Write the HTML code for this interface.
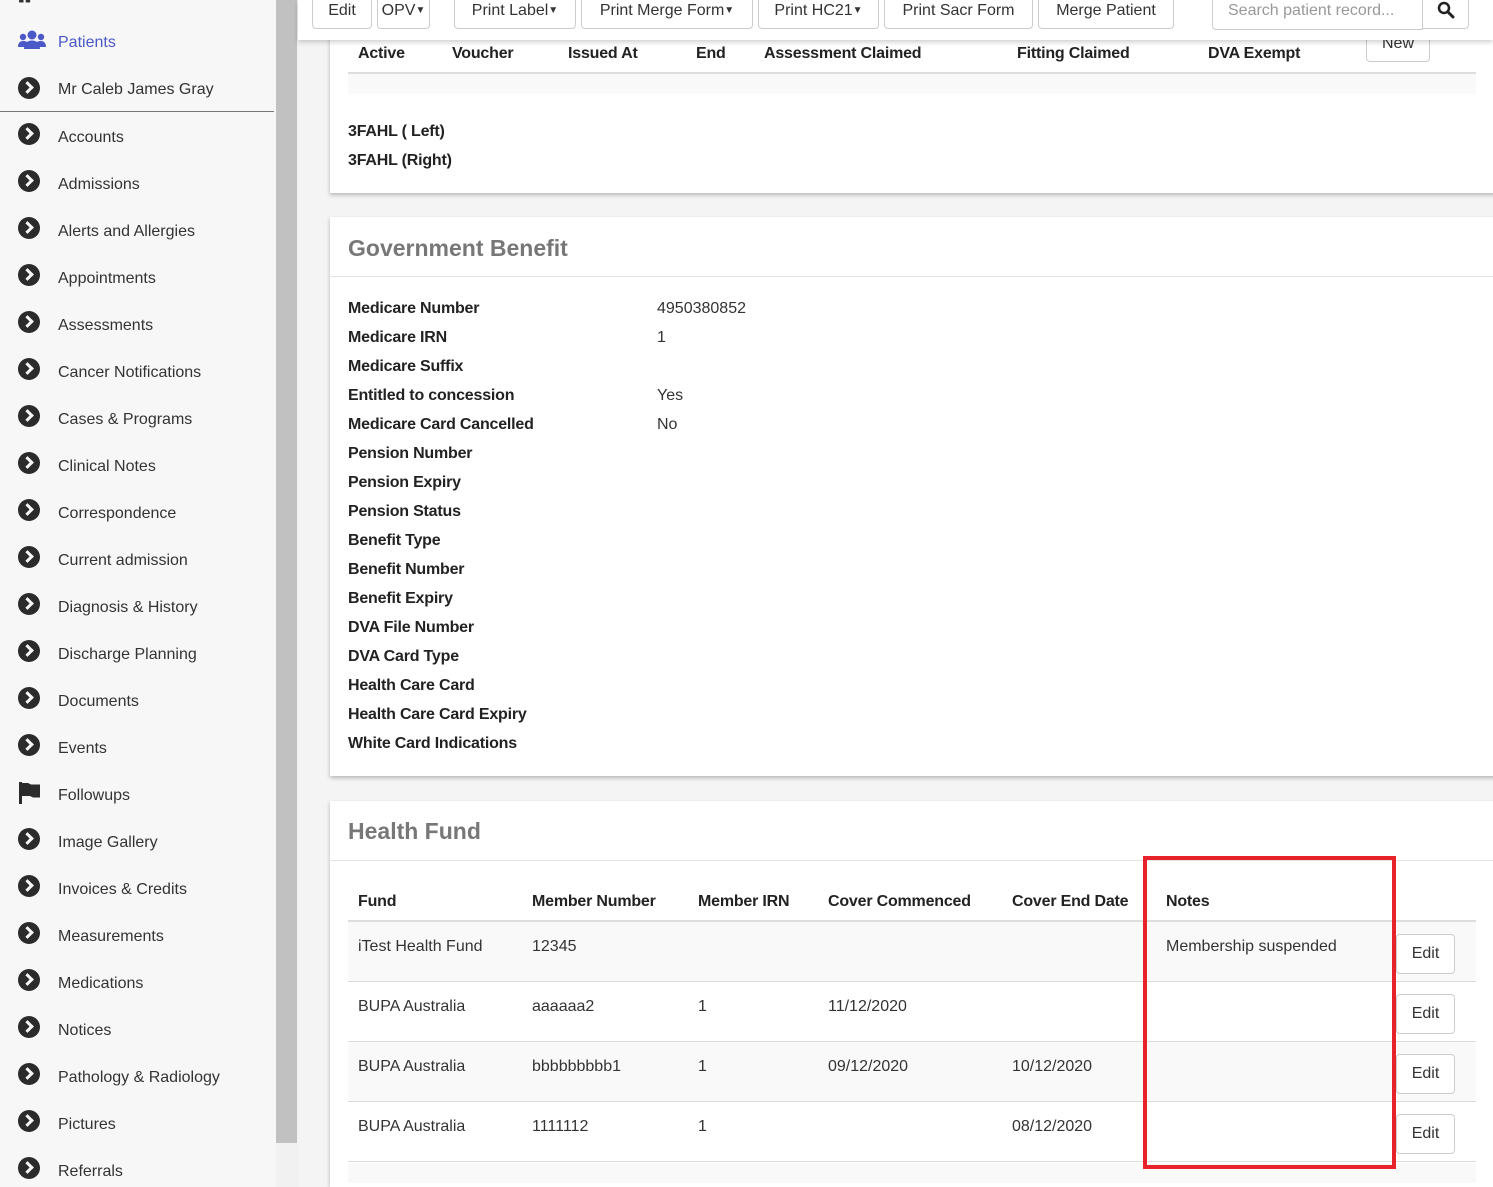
<!DOCTYPE html>
<html><head><meta charset="utf-8"><style>
*{box-sizing:border-box;margin:0;padding:0}
html,body{width:1493px;height:1187px;overflow:hidden}
body{background:#f4f4f4;font-family:"Liberation Sans",sans-serif;font-size:16px;color:#333;position:relative}
.a{position:absolute;white-space:nowrap}
.t{margin-top:2px}
#side{position:absolute;left:0;top:0;width:276px;height:1187px;background:#f7f7f7}
.it{position:absolute;left:58px;font-size:16px;color:#333;line-height:20px;margin-top:2px}
.ic{position:absolute;left:18px;width:22px;height:22px;border-radius:50%;background:#2b2b2b}
.ic:after{content:"";position:absolute;left:5px;top:6px;width:6px;height:6px;border-right:3px solid #f7f7f7;border-top:3px solid #f7f7f7;transform:rotate(45deg)}
.card{position:absolute;left:330px;width:1180px;background:#fff;box-shadow:0 2px 4px rgba(0,0,0,.25)}
.btn{position:absolute;border:1px solid #ccc;border-radius:4px;background:#fff;color:#333;font-size:16px;text-align:center;line-height:30px;white-space:nowrap}
.cr{font-size:10px;vertical-align:2px}
.th{position:absolute;font-weight:bold;color:#222;font-size:16px;margin-top:2px;letter-spacing:-0.2px}
.lb{position:absolute;left:348px;font-weight:bold;color:#222;margin-top:2px;letter-spacing:-0.2px}
.vl{position:absolute;left:657px;color:#333;margin-top:2px}
.h2{position:absolute;left:348px;font-size:23px;font-weight:bold;color:#777;margin-top:1px}
</style></head><body>
<div id="side">
<div class="a" style="left:18px;top:-10px;width:20px;height:14px;font-size:12px;color:#333">▮▮</div>
<svg class="a" style="left:18px;top:30px" width="28" height="20" viewBox="0 0 28 20"><circle cx="14" cy="5" r="4.5" fill="#4a58c8"/><circle cx="5" cy="7" r="3.2" fill="#4a58c8"/><circle cx="23" cy="7" r="3.2" fill="#4a58c8"/><path d="M6 19c0-6 3.5-8.5 8-8.5s8 2.5 8 8.5z" fill="#4a58c8"/><path d="M0 17c0-4 2-6 5-6s4 1 4 1l-2 5z M28 17c0-4-2-6-5-6s-4 1-4 1l2 5z" fill="#4a58c8"/></svg>
<div class="it" style="top:31px;color:#4a58c8">Patients</div>
<div class="ic" style="top:77px"></div><div class="it" style="top:78px">Mr Caleb James Gray</div>
<div class="a" style="left:0;top:111px;width:274px;height:1px;background:#777"></div>
</div>
<div id="items"></div>
<div class="a" style="left:276px;top:0;width:22px;height:1187px;background:#f1f1f1"></div>
<div class="a" style="left:276px;top:0;width:21px;height:1143px;background:#c1c1c1"></div>

<div class="card" style="top:20px;height:173px"></div>
<div class="th" style="left:358px;top:43px">Active</div>
<div class="th" style="left:452px;top:43px">Voucher</div>
<div class="th" style="left:568px;top:43px">Issued At</div>
<div class="th" style="left:696px;top:43px">End</div>
<div class="th" style="left:764px;top:43px">Assessment Claimed</div>
<div class="th" style="left:1017px;top:43px">Fitting Claimed</div>
<div class="th" style="left:1208px;top:43px">DVA Exempt</div>
<div class="btn" style="left:1366px;top:28px;width:64px;height:34px;line-height:30px">New</div>
<div class="a" style="left:348px;top:72px;width:1128px;height:2px;background:#ddd"></div>
<div class="a" style="left:348px;top:74px;width:1128px;height:20px;background:#f9f9f9"></div>
<div class="lb" style="top:121px">3FAHL ( Left)</div>
<div class="lb" style="top:150px">3FAHL (Right)</div>

<div class="card" style="top:217px;height:559px"></div>
<div class="a" style="left:330px;top:276px;width:1163px;height:1px;background:#e5e5e5"></div>
<div class="h2" style="top:234px">Government Benefit</div>
<div id="gb"></div>

<div class="card" style="top:801px;height:386px"></div>
<div class="a" style="left:330px;top:860px;width:1163px;height:1px;background:#e5e5e5"></div>
<div class="h2" style="top:817px">Health Fund</div>
<div class="th" style="left:358px;top:891px">Fund</div>
<div class="th" style="left:532px;top:891px">Member Number</div>
<div class="th" style="left:698px;top:891px">Member IRN</div>
<div class="th" style="left:828px;top:891px">Cover Commenced</div>
<div class="th" style="left:1012px;top:891px">Cover End Date</div>
<div class="th" style="left:1166px;top:891px">Notes</div>
<div class="a" style="left:348px;top:920px;width:1128px;height:2px;background:#ddd"></div>
<div id="rows"></div>
<div class="a" style="left:1143px;top:856px;width:253px;height:313px;border:4px solid #e8222a"></div>

<div class="a" style="left:298px;top:0;width:1195px;height:40px;background:#fff;box-shadow:0 2px 5px rgba(0,0,0,.2)"></div>
<div class="btn" style="left:312px;top:-5px;width:60px;height:34px">Edit</div>
<div class="btn" style="left:377px;top:-5px;width:53px;height:34px">OPV<span class="cr">▼</span></div>
<div class="btn" style="left:454px;top:-5px;width:122px;height:34px">Print Label<span class="cr">▼</span></div>
<div class="btn" style="left:581px;top:-5px;width:172px;height:34px">Print Merge Form<span class="cr">▼</span></div>
<div class="btn" style="left:758px;top:-5px;width:121px;height:34px">Print HC21<span class="cr">▼</span></div>
<div class="btn" style="left:884px;top:-5px;width:149px;height:34px">Print Sacr Form</div>
<div class="btn" style="left:1038px;top:-5px;width:136px;height:34px">Merge Patient</div>
<div class="btn" style="left:1212px;top:-5px;width:211px;height:35px;border-radius:4px 0 0 4px;text-align:left;padding-left:15px;color:#999">Search patient record...</div>
<div class="btn" style="left:1422px;top:-5px;width:47px;height:34px;border-radius:0 4px 4px 0"><svg width="18" height="18" viewBox="0 0 18 18" style="margin-top:5px"><circle cx="7" cy="7" r="5" fill="none" stroke="#222" stroke-width="2.5"/><path d="M11 11l5 5" stroke="#222" stroke-width="3" stroke-linecap="round"/></svg></div>

<script>
var names=["Accounts","Admissions","Alerts and Allergies","Appointments","Assessments","Cancer Notifications","Cases & Programs","Clinical Notes","Correspondence","Current admission","Diagnosis & History","Discharge Planning","Documents","Events","Followups","Image Gallery","Invoices & Credits","Measurements","Medications","Notices","Pathology & Radiology","Pictures","Referrals"];
var h="";names.forEach(function(n,i){var y=126+i*47;
if(n=="Followups")h+='<svg class="a" style="left:19px;top:'+(y-2)+'px" width="22" height="22" viewBox="0 0 22 22"><rect x="0" y="0" width="3" height="22" fill="#2b2b2b"/><path d="M3 1h6l3 1.5h9v13h-7l-3-1.5H3z" fill="#2b2b2b"/></svg>';
else h+='<div class="ic" style="top:'+(y-3)+'px"></div>';
h+='<div class="it" style="top:'+y+'px">'+n.replace(/&/g,"&amp;")+'</div>';});
document.getElementById("items").innerHTML=h;
var gb=[["Medicare Number","4950380852"],["Medicare IRN","1"],["Medicare Suffix",""],["Entitled to concession","Yes"],["Medicare Card Cancelled","No"],["Pension Number",""],["Pension Expiry",""],["Pension Status",""],["Benefit Type",""],["Benefit Number",""],["Benefit Expiry",""],["DVA File Number",""],["DVA Card Type",""],["Health Care Card",""],["Health Care Card Expiry",""],["White Card Indications",""]];
h="";gb.forEach(function(r,i){var y=298+i*29;h+='<div class="lb" style="top:'+y+'px">'+r[0]+'</div><div class="vl" style="top:'+y+'px">'+r[1]+'</div>';});
document.getElementById("gb").innerHTML=h;
var rows=[["iTest Health Fund","12345","","","","Membership suspended"],["BUPA Australia","aaaaaa2","1","11/12/2020","",""],["BUPA Australia","bbbbbbbbb1","1","09/12/2020","10/12/2020",""],["BUPA Australia","1111112","1","","08/12/2020",""]];
var xs=[358,532,698,828,1012,1166];h="";
rows.forEach(function(r,i){var t=922+i*60;h+='<div class="a" style="left:348px;top:'+t+'px;width:1128px;height:60px;background:'+(i%2?'#fff':'#f9f9f9')+';border-bottom:1px solid #ddd"></div>';
r.forEach(function(c,j){h+='<div class="a t" style="left:'+xs[j]+'px;top:'+(t+14)+'px">'+c+'</div>';});
h+='<div class="btn" style="left:1396px;top:'+(t+12)+'px;width:59px;height:40px;line-height:38px">Edit</div>';});
h+='<div class="a" style="left:348px;top:1163px;width:1128px;height:20px;background:#f9f9f9"></div>';
document.getElementById("rows").innerHTML=h;
</script>
</body></html>
